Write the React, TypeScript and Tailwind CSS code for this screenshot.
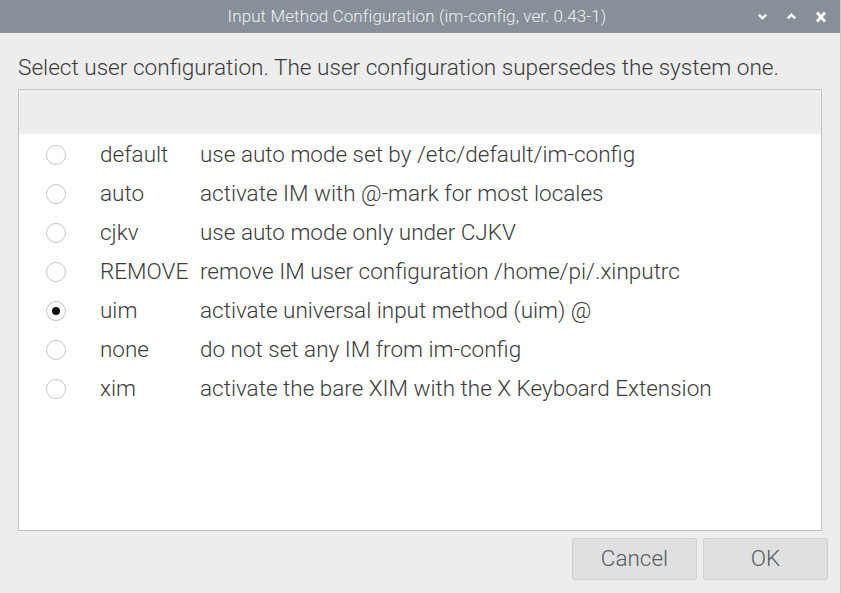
import { useState } from "react";

const OPTIONS = [
  { id: "default", desc: "use auto mode set by /etc/default/im-config" },
  { id: "auto", desc: "activate IM with @-mark for most locales" },
  { id: "cjkv", desc: "use auto mode only under CJKV" },
  { id: "REMOVE", desc: "remove IM user configuration /home/pi/.xinputrc" },
  { id: "uim", desc: "activate universal input method (uim) @" },
  { id: "none", desc: "do not set any IM from im-config" },
  { id: "xim", desc: "activate the bare XIM with the X Keyboard Extension" },
];

function Radio({ checked }: { checked: boolean }) {
  return (
    <span className="flex h-[20px] w-[20px] items-center justify-center rounded-full border border-[#c6c6c6] bg-white">
      {checked && <span className="h-[8px] w-[8px] rounded-full bg-[#111]" />}
    </span>
  );
}

export default function App() {
  const [selected, setSelected] = useState("uim");

  return (
    <div
      className="flex h-[593px] w-[841px] flex-col overflow-hidden border-r border-[#c9c9c9] bg-[#ededed] font-light text-[#3b3b3b]"
      style={{ fontFamily: "Roboto, 'Liberation Sans', sans-serif" }}
    >
      {/* title bar */}
      <div className="relative flex h-[33px] shrink-0 items-center justify-center bg-[#878f99]">
        <span className="ml-[-6px] text-[17px] tracking-[0.1px] text-[#eef0f2]">
          Input Method Configuration (im-config, ver. 0.43-1)
        </span>
        <div className="absolute right-[13px] top-0 flex h-[33px] items-center gap-[18px]">
          <svg width="11" height="11" viewBox="0 0 12 12">
            <path d="M2 4 L6 8 L10 4" fill="none" stroke="#fff" strokeWidth="2.6" />
          </svg>
          <svg width="11" height="11" viewBox="0 0 12 12">
            <path d="M2 8 L6 4 L10 8" fill="none" stroke="#fff" strokeWidth="2.6" />
          </svg>
          <svg width="12" height="12" viewBox="0 0 12 12">
            <path d="M2 1.5 L10 10.5 M10 1.5 L2 10.5" fill="none" stroke="#fff" strokeWidth="2.8" />
          </svg>
        </div>
      </div>

      {/* body */}
      <div className="flex flex-1 flex-col pl-[18px] pr-[18px]">
        <p className="mt-[22px] text-[22.6px] leading-[26px]">
          Select user configuration. The user configuration supersedes the system one.
        </p>

        <div className="mt-[8px] flex h-[442px] w-[804px] flex-col border border-[#c4c4c4] bg-white">
          <div className="h-[44px] shrink-0 bg-[#ededed]" />
          <div className="flex flex-col pt-[1px]">
            {OPTIONS.map((o) => (
              <div
                key={o.id}
                className="flex h-[39px] items-center text-[22.5px]"
                onClick={() => setSelected(o.id)}
              >
                <span className="ml-[27px]">
                  <Radio checked={selected === o.id} />
                </span>
                <span className="ml-[34px] w-[100px]">{o.id}</span>
                <span>{o.desc}</span>
              </div>
            ))}
          </div>
        </div>

        <div className="mt-[7px] flex justify-end gap-[6px]">
          <button className="h-[42px] w-[125px] rounded-[2px] border border-[#d2d2d2] bg-[#e0e0e0] text-[22.5px] font-light text-[#555b63]">
            Cancel
          </button>
          <button className="mr-[-6px] h-[42px] w-[125px] rounded-[2px] border border-[#d2d2d2] bg-[#e0e0e0] text-[22.5px] font-light text-[#555b63]">
            OK
          </button>
        </div>
      </div>
    </div>
  );
}
